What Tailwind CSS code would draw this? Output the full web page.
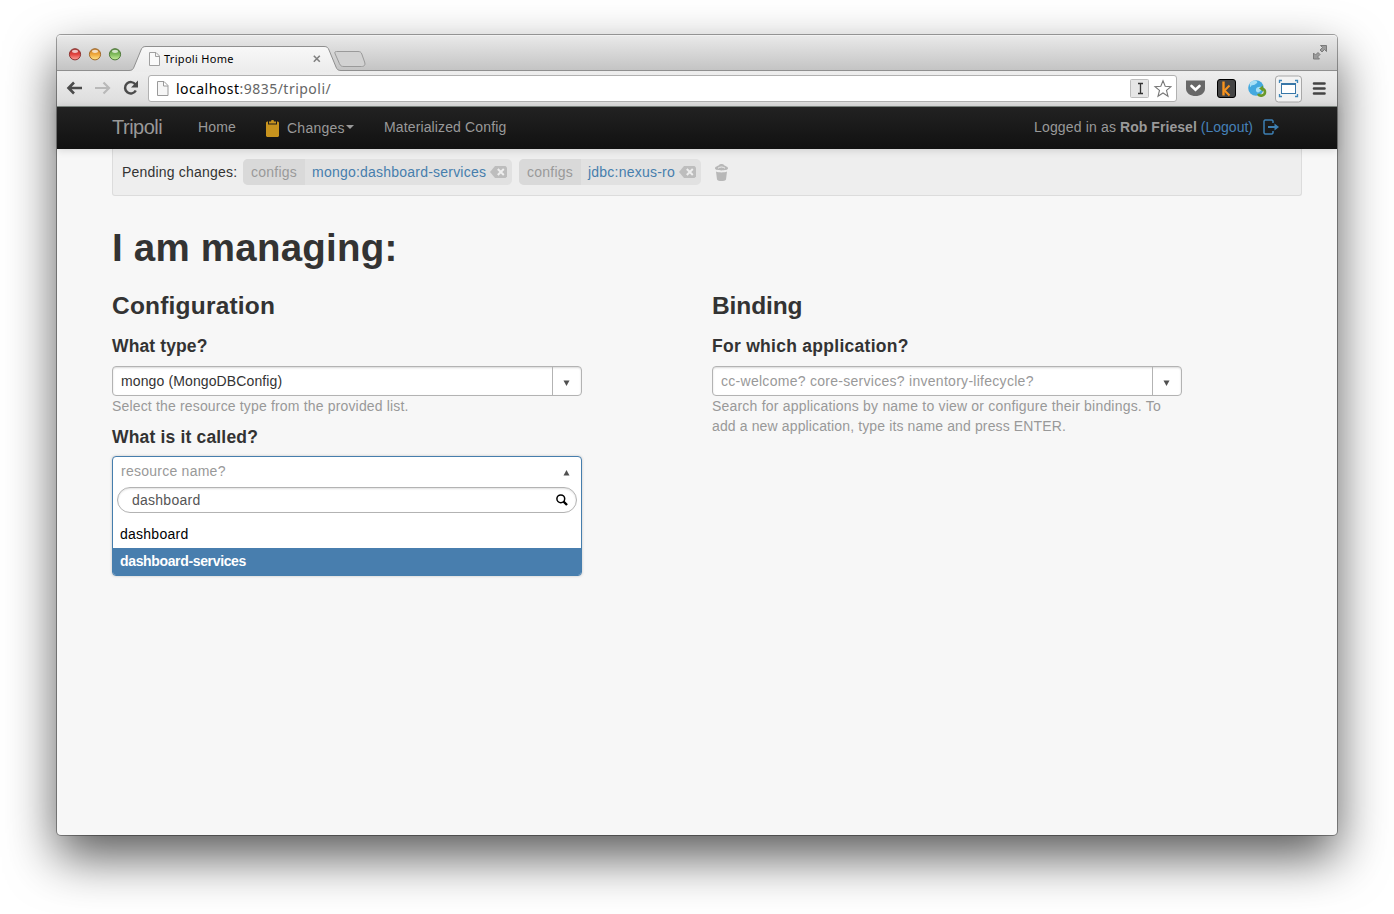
<!DOCTYPE html>
<html lang="en">
<head>
<meta charset="utf-8">
<title>Tripoli Home</title>
<script src="https://cdn.jsdelivr.net/npm/@tailwindcss/browser@4"></script>
</head>
<body class="h-[914px] overflow-hidden bg-white pt-[35px] pl-[57px] font-['Liberation_Sans',Arial,sans-serif] text-sm leading-5 text-[#333]">
<div class="relative flex h-[800px] w-[1280px] flex-col rounded-[4px] bg-[#f7f7f7] shadow-[0_0_0_1px_rgba(0,0,0,0.35),0_22px_50px_rgba(0,0,0,0.65)]">

  <!-- Tab strip -->
  <div class="relative flex h-[36px] items-start rounded-t-[4px] border-t border-[#f2f2f2] bg-linear-to-b from-[#e9e9e9] to-[#c3c3c3]">
    <svg class="absolute top-[-1px] left-0" width="1280" height="37" viewBox="0 0 1280 37" fill="none">
      <defs>
        <linearGradient id="tab" x1="0" y1="0" x2="0" y2="1"><stop stop-color="#f8f8f8"/><stop offset="1" stop-color="#ececec"/></linearGradient>
        <linearGradient id="red" x1="0" y1="0" x2="0" y2="1"><stop stop-color="#a8302e"/><stop offset=".5" stop-color="#e2433f"/><stop offset="1" stop-color="#ffa49c"/></linearGradient>
        <linearGradient id="amber" x1="0" y1="0" x2="0" y2="1"><stop stop-color="#c17a2c"/><stop offset=".5" stop-color="#f0a83c"/><stop offset="1" stop-color="#ffe68c"/></linearGradient>
        <linearGradient id="green" x1="0" y1="0" x2="0" y2="1"><stop stop-color="#568a3c"/><stop offset=".5" stop-color="#80bb5c"/><stop offset="1" stop-color="#c9f09c"/></linearGradient>
      </defs>
      <path d="M0 35.500H72c3 0 4-1 5-3.500l7-17c1-2.500 2-3.500 5-3.500H267c3 0 4 1 5 3.500l7 17c1 2.500 2 3.500 5 3.500H1280V37H0z" fill="url(#tab)"/>
      <path d="M0 35.500H72c3 0 4-1 5-3.500l7-17c1-2.500 2-3.500 5-3.500H267c3 0 4 1 5 3.500l7 17c1 2.500 2 3.500 5 3.500H1280" stroke="#8f8f8f"/>
      <path d="M279.500 16.500H301c2 0 3 .5 3.800 2.500l2.800 8c1 3-.2 4.500-3.100 4.500H287c-2.500 0-3.600-.6-4.600-3L278.200 19c-.8-1.800-.3-2.500 1.300-2.500z" fill="#d2d2d2" stroke="#9a9a9a"/>
      <circle cx="18" cy="19.300" r="5.600" fill="url(#red)" stroke="#8c3532"/>
      <circle cx="38" cy="19.300" r="5.600" fill="url(#amber)" stroke="#a06a2c"/>
      <circle cx="58" cy="19.300" r="5.600" fill="url(#green)" stroke="#4e773a"/>
      <ellipse cx="18" cy="16.300" rx="3" ry="1.600" fill="#fff" fill-opacity=".7"/>
      <ellipse cx="38" cy="16.300" rx="3" ry="1.600" fill="#fff" fill-opacity=".7"/>
      <ellipse cx="58" cy="16.300" rx="3" ry="1.600" fill="#fff" fill-opacity=".7"/>
      <path d="M92.500 17.500h6.500l3.500 3.500v9.500h-10zM98.500 17.500v4h4" fill="#fafafa" stroke="#a0a0a0"/>
      <path d="M256.800 20.800l6 6M262.800 20.800l-6 6" stroke="#808080" stroke-width="1.600"/>
      <path d="M1263.500 10.500h6v6l-2-2-2.500 2.500-2-2 2.500-2.500zM1256.500 18v6h6l-2-2 2.500-2.500-2-2-2.500 2.500z" fill="#9b9b9b" stroke="#7b7b7b"/>
    </svg>
    <span class="relative ml-[107px] mt-[15px] font-['Noto_Sans',sans-serif] text-[11px] leading-4 tracking-[0.3px] text-black">Tripoli Home</span>
  </div>

  <!-- Toolbar -->
  <div class="flex h-[36px] shrink-0 items-center border-b border-[#808883] bg-linear-to-b from-[#eeeeee] to-[#dcdcdc]">
    <svg class="mt-[-1px] ml-[9px] shrink-0" width="82" height="20" viewBox="0 0 82 20" fill="none">
      <path d="M2 10h14M8 4.500L2.500 10 8 15.500" stroke="#4b4b4b" stroke-width="2.600"/>
      <path d="M29 10h14M37.500 4.500L43 10l-5.500 5.500" stroke="#b9b9b9" stroke-width="2.200"/>
      <path d="M69.500 6.600A5.700 5.700 0 1 0 69.800 12.500" stroke="#4b4b4b" stroke-width="2.500"/>
      <path d="M72 2.500v7h-7z" fill="#4b4b4b"/>
    </svg>
    <div class="flex h-[27px] w-[1029px] items-center rounded-[3px] border border-[#b1b1b1] bg-white pl-2 pr-1">
      <svg width="12" height="15" viewBox="0 0 12 15" fill="none"><path d="M.5.500h6.500l4 4v10H.5zM6.500.500v4.500h4.500" fill="#f6f6f6" stroke="#9a9a9a"/></svg>
      <span class="ml-[7px] flex-1 font-['Noto_Sans',sans-serif] text-[14px] tracking-[0.48px] text-[#666]"><span class="text-black">localhost</span>:9835/tripoli/</span>
      <svg width="42" height="20" viewBox="0 0 42 20" fill="none">
        <rect x=".5" y=".5" width="18" height="18" rx="1" fill="#e6e6e6" stroke="#bdbdbd"/>
        <path d="M8 4.500h5M8 14.500h5M10.500 4.500v10" stroke="#333" stroke-width="1.300"/>
        <path d="M33 1.800l2.200 5.500 5.800.4-4.500 3.700 1.500 5.800-5-3.200-5 3.200 1.500-5.800L25 7.700l5.800-.4z" fill="#fff" stroke="#777" stroke-width="1.100"/>
      </svg>
    </div>
    <svg class="ml-[9px] shrink-0" width="142" height="28" viewBox="0 0 142 28" fill="none">
      <path d="M0 5.500h19v8c0 10-19 10-19 0z" fill="#686868"/><path d="M5.500 11l4 3.800 4-3.800" stroke="#fff" stroke-width="2.600" stroke-linecap="round"/>
      <rect x="31.500" y="4.500" width="18" height="18" rx="2.500" fill="#444" stroke="#000"/>
      <path d="M37.500 6.500v14" stroke="#f7931e" stroke-width="2.400"/><path d="M43.500 10.500l-5 5 5 5" stroke="#f7931e" stroke-width="2"/>
      <circle cx="70" cy="13" r="7.800" fill="#43a9df"/>
      <path d="M64 8c3-3 6-3 7-1.500s-1 2-2 3-4 0-4 2-2-1-1-3.500zM71 12.500c2-1 4-1 5 0s-2 5-4 5-3-3.500-1-5z" fill="#a7e0f6"/>
      <path d="M72 19c2 3 7 1.500 7-2 0-2-1-3-3-3.500" stroke="#69992b" stroke-width="2.600"/><path d="M77 10.500v6l-4-3z" fill="#69992b"/>
      <rect x="89.500" y="1" width="26" height="26" rx="3" fill="#f3f3f3" stroke="#a8a8a8"/>
      <path d="M93.500 8V5.500H96M109 5.500h2.500V8M93.500 19v2.500H96M109 21.500h2.500V19" stroke="#3f86b8" stroke-width="1.300"/>
      <rect x="95.500" y="8.500" width="14" height="10" fill="#fff" stroke="#3877a8"/><path d="M95 9h15" stroke="#3877a8" stroke-width="2"/>
      <path d="M128 8.500h10.500M128 13.500h10.500M128 18.500h10.500" stroke="#444" stroke-width="2.600" stroke-linecap="round"/>
    </svg>
  </div>

  <!-- Navigation bar -->
  <nav class="relative flex h-[42px] shrink-0 items-center bg-linear-to-b from-[#222] to-[#111] pb-[2px] pl-[55px] text-[#999] shadow-[0_1px_8px_rgba(0,0,0,0.15)]">
    <span class="w-[86px] text-xl tracking-[-0.5px]">Tripoli</span>
    <span class="w-[68px] tracking-[0.15px]">Home</span>
    <svg class="mt-[2px]" width="13" height="17" viewBox="0 0 13 17"><path d="M1 1.500h1v3h9v-3h1l1 1V16l-1 1H1l-1-1V2.500z" fill="#c7931e"/><path d="M3 1.500h2L5.500 0h2L8 1.500h2v2H3z" fill="#c7931e"/></svg>
    <span class="mt-[2px] ml-2 w-[59px] tracking-[0.25px]">Changes</span>
    <svg class="mt-[-1px]" width="8" height="4" viewBox="0 0 8 4"><path d="M0 0h8L4 4z" fill="#999"/></svg>
    <span class="ml-[30px] tracking-[0.13px]">Materialized Config</span>
    <span class="ml-auto flex gap-1"><span class="tracking-[0.15px]">Logged in as</span><b class="tracking-[0.05px]">Rob Friesel</b><span class="text-[#4681b8]">(Logout)</span></span>
    <svg class="mr-[58px] ml-[10px]" width="16" height="16" viewBox="0 0 16 16" fill="none"><path d="M10 4V2L9 1H2L1 2v12l1 1h7l1-1v-2" stroke="#3d7fb2" stroke-width="1.500"/><path d="M5 8h8" stroke="#3d7fb2" stroke-width="2"/><path d="M11.500 4.500L16 8l-4.500 3.500z" fill="#3d7fb2"/></svg>
  </nav>

  <!-- Pending changes -->
  <div class="ml-[55px] flex h-[47px] w-[1190px] shrink-0 items-center rounded-b-[3px] border border-t-0 border-[#dcdcdc] bg-[#eee] pl-[9px]">
    <span class="w-[121px] tracking-[0.2px]">Pending changes:</span>
    <div class="flex h-[26px] w-[269px] items-center overflow-hidden rounded-[5px] bg-[#e1e1e1]">
      <span class="flex h-full w-[62px] items-center justify-center bg-[#d9d9d9] tracking-[0.25px] text-[#999]">configs</span>
      <span class="ml-[7px] tracking-[0.22px] text-[#467ead]">mongo:dashboard-services</span>
      <svg class="mr-[5px] ml-auto" width="17" height="12" viewBox="0 0 17 12"><path d="M0 6l5-6h10.500L17 1.500v9L15.500 12H5z" fill="#bdbdbd"/><path d="M7.800 3l6 6M13.800 3l-6 6" stroke="#eee" stroke-width="2"/></svg>
    </div>
    <div class="ml-[7px] flex h-[26px] w-[182px] items-center overflow-hidden rounded-[5px] bg-[#e1e1e1]">
      <span class="flex h-full w-[62px] items-center justify-center bg-[#d9d9d9] tracking-[0.25px] text-[#999]">configs</span>
      <span class="ml-[7px] tracking-[0.23px] text-[#467ead]">jdbc:nexus-ro</span>
      <svg class="mr-[5px] ml-auto" width="17" height="12" viewBox="0 0 17 12"><path d="M0 6l5-6h10.500L17 1.500v9L15.500 12H5z" fill="#bdbdbd"/><path d="M7.800 3l6 6M13.800 3l-6 6" stroke="#eee" stroke-width="2"/></svg>
    </div>
    <svg class="ml-[14px]" width="13" height="17" viewBox="0 0 13 17"><path d="M0 4.500C0 2 3 2.500 4 1c1-1.300 4-1.300 5 0 1 1.500 4 1 4 3.500C13 7 0 7 0 4.500z" fill="#b8b8b8"/><path d="M3 4.200c2-1.600 5-1.600 7 0" stroke="#eee" fill="none"/><path d="M1 7.500c3 1.200 8 1.200 11 0l-1 8c-1 2-8 2-9 0z" fill="#b8b8b8"/></svg>
  </div>

  <!-- Page content -->
  <main class="pt-[32px] pl-[55px]">
    <h1 class="text-[38.500px] leading-10 font-bold tracking-[0.22px]">I am managing:</h1>
    <div class="mt-[18px] flex">
      <section class="w-[600px]">
        <h2 class="text-[24.500px] leading-10 font-bold tracking-[0.2px]">Configuration</h2>
        <h3 class="mt-[10px] text-[17.500px] leading-5 font-bold tracking-[0.12px]">What type?</h3>
        <div class="mt-[10px] flex h-[30px] w-[470px] items-stretch rounded-[4px] border border-[#b3b3b3] bg-white shadow-[inset_0_1px_2px_rgba(0,0,0,0.15)]">
          <span class="flex-1 pt-1 pl-2 tracking-[0.12px]">mongo (MongoDBConfig)</span>
          <span class="flex w-[29px] items-center justify-center border-l border-[#b3b3b3]"><svg class="mt-[3px] mr-px" width="7" height="6" viewBox="0 0 7 6"><path d="M.5.500h6L3.500 6z" fill="#505050"/></svg></span>
        </div>
        <p class="tracking-[0.165px] text-[#999]">Select the resource type from the provided list.</p>
        <h3 class="mt-[11px] text-[17.500px] leading-5 font-bold tracking-[0.17px]">What is it called?</h3>
        <div class="mt-[9px] h-[120px] w-[470px] overflow-hidden rounded-[4px] border border-[#467ead] bg-white shadow-[0_0_3px_rgba(0,0,0,0.2)]">
          <div class="flex h-[30px] items-center justify-between pr-[11px] pb-[2px] pl-2"><span class="tracking-[0.25px] text-[#999]">resource name?</span><svg class="mt-[3px]" width="7" height="6" viewBox="0 0 7 6"><path d="M.5 5.500h6L3.500 0z" fill="#505050"/></svg></div>
          <div class="mx-1 flex h-[26px] items-center justify-between rounded-full border border-[#b3b3b3] pr-2 pl-[14px] shadow-[inset_0_1px_2px_rgba(0,0,0,0.12)]"><span class="tracking-[0.25px] text-[#555]">dashboard</span><svg width="12" height="12" viewBox="0 0 12 12" fill="none"><circle cx="4.800" cy="4.800" r="3.900" stroke="#000" stroke-width="1.500"/><path d="M7.500 7.500l3.500 3.500" stroke="#000" stroke-width="2.400"/></svg></div>
          <div class="mt-[7px] flex h-[28px] items-center pl-[7px] tracking-[0.25px] text-black">dashboard</div>
          <div class="flex h-[28px] items-center bg-[#487eae] pb-[2px] pl-[7px] font-bold tracking-[-0.35px] text-white">dashboard-services</div>
        </div>
      </section>
      <section class="w-[470px]">
        <h2 class="text-[24.500px] leading-10 font-bold tracking-[-0.1px]">Binding</h2>
        <h3 class="mt-[10px] text-[17.500px] leading-5 font-bold tracking-[0.28px]">For which application?</h3>
        <div class="mt-[10px] flex h-[30px] w-[470px] items-stretch rounded-[4px] border border-[#b3b3b3] bg-white shadow-[inset_0_1px_2px_rgba(0,0,0,0.15)]">
          <span class="flex-1 pt-1 pl-2 tracking-[0.28px] text-[#999]">cc-welcome? core-services? inventory-lifecycle?</span>
          <span class="flex w-[29px] items-center justify-center border-l border-[#b3b3b3]"><svg class="mt-[3px] mr-px" width="7" height="6" viewBox="0 0 7 6"><path d="M.5.500h6L3.500 6z" fill="#505050"/></svg></span>
        </div>
        <p class="text-[#999]"><span class="tracking-[0.2px]">Search for applications by name to view or configure their bindings. To</span><br><span class="tracking-[0.13px]">add a new application, type its name and press ENTER.</span></p>
      </section>
    </div>
  </main>
</div>
</body>
</html>
